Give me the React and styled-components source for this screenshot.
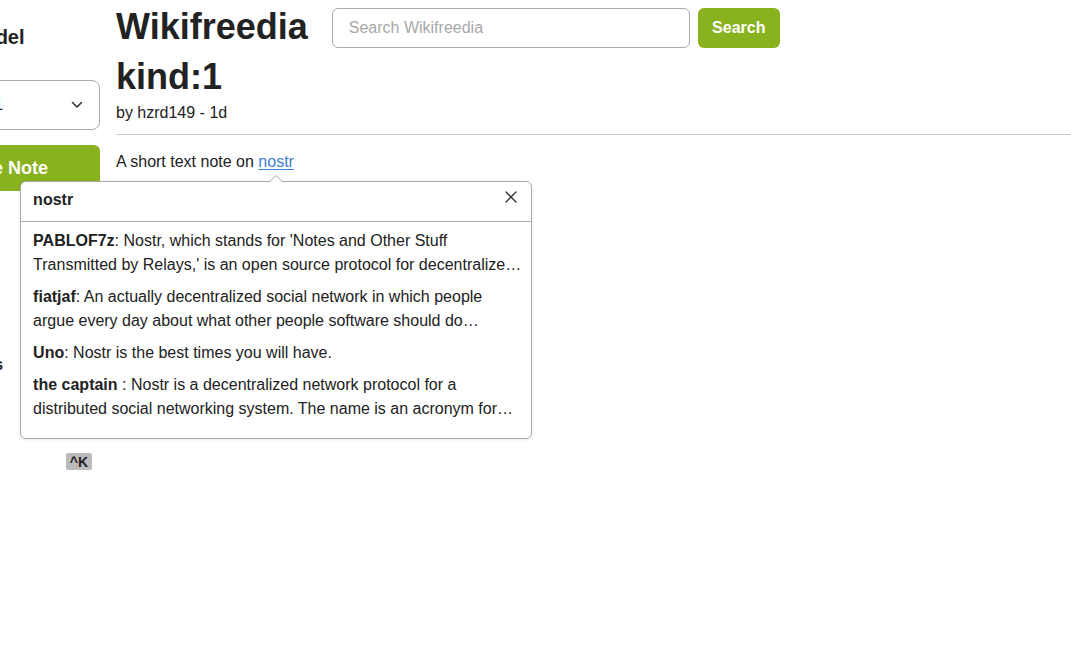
import React, { useState } from 'react';
import styled, { createGlobalStyle } from 'styled-components';

const GlobalStyle = createGlobalStyle`
  html, body {
    margin: 0;
    padding: 0;
    background: #ffffff;
    overflow: hidden;
  }
  body {
    font-family: 'Liberation Sans', Arial, sans-serif;
    color: #222222;
  }
  * {
    box-sizing: border-box;
  }
`;

const GREEN = '#88b21e';

// --- Layout ---

const Page = styled.div`
  display: flex;
  align-items: flex-start;
  gap: 16px;
  width: 1071px;
  height: 655px;
`;

const Sidebar = styled.aside`
  width: 200px;
  margin-left: -100px;
  padding-left: 16px;
  display: flex;
  flex-direction: column;
  flex-shrink: 0;
`;

const SideHeading = styled.h2`
  margin: ${(p) => p.$top || 0}px 0 0 0;
  font-size: ${(p) => p.$size || 20}px;
  line-height: 24px;
  font-weight: 700;
  white-space: nowrap;
`;

const SelectBox = styled.div`
  margin-top: 31px;
  height: 50px;
  border: 1px solid #aaaaaa;
  border-radius: 8px;
  padding: 0 16px;
  display: flex;
  align-items: center;
  justify-content: space-between;
  font-size: 16px;
  white-space: nowrap;
  color: #222;
`;

const PrimaryButton = styled.button`
  margin-top: 15px;
  height: 46px;
  border: none;
  border-radius: 6px;
  background: ${GREEN};
  color: #fff;
  font-family: inherit;
  font-size: 18px;
  font-weight: 700;
  text-align: left;
  padding: 0 0 0 31px;
  white-space: nowrap;
`;

const ShortcutRow = styled.div`
  margin-top: 76px;
  display: flex;
  justify-content: flex-end;
  padding-right: 8px;
`;

const Kbd = styled.kbd`
  display: inline-flex;
  align-items: center;
  justify-content: center;
  width: 26px;
  height: 17px;
  background: #bbbbbb;
  border-radius: 2px;
  font-family: 'Liberation Sans', Arial, sans-serif;
  font-size: 14px;
  font-weight: 700;
  color: #222;
`;

const Main = styled.main`
  flex: 1;
  min-width: 0;
  display: flex;
  flex-direction: column;
`;

const TopBar = styled.header`
  display: flex;
  align-items: flex-start;
  gap: 24px;
`;

const Title = styled.h1`
  margin: 5px 0 0 0;
  font-size: 36px;
  line-height: 1.2;
  font-weight: 700;
  white-space: nowrap;
`;

const SearchForm = styled.form`
  margin-top: 8px;
  display: flex;
  gap: 8px;
`;

const SearchInput = styled.input`
  width: 358px;
  height: 40px;
  border: 1px solid #aaaaaa;
  border-radius: 6px;
  padding: 0 16px;
  font-family: inherit;
  font-size: 16px;
  color: #222;
  outline: none;

  &::placeholder {
    color: #a8a8a8;
  }
`;

const SearchButton = styled.button`
  width: 82px;
  height: 40px;
  border: none;
  border-radius: 6px;
  background: ${GREEN};
  color: #fff;
  font-family: inherit;
  font-size: 16px;
  font-weight: 700;
`;

const Kind = styled.h1`
  margin: 7px 0 0 0;
  font-size: 36px;
  line-height: 1.2;
  font-weight: 700;
`;

const Byline = styled.div`
  margin-top: 3px;
  font-size: 16px;
  line-height: 24px;
`;

const Rule = styled.hr`
  margin: 9px 0 0 0;
  border: none;
  border-top: 1px solid #cccccc;
`;

const Body = styled.p`
  margin: 15px 0 0 0;
  font-size: 16px;
  line-height: 24px;
`;

const LinkWrap = styled.span`
  position: relative;
`;

const Link = styled.a`
  color: #3a7dd4;
  text-decoration: underline;
  text-underline-offset: 2px;
  cursor: pointer;
`;

// --- Popover ---

const Popover = styled.div`
  position: absolute;
  top: 28px;
  left: 50%;
  transform: translateX(-50%);
  width: 512px;
  background: #fff;
  border: 1px solid #aaaaaa;
  border-radius: 6px;
  box-shadow: 0 1px 4px rgba(0, 0, 0, 0.08);
  z-index: 10;

  &::before,
  &::after {
    content: '';
    position: absolute;
    left: 50%;
    width: 0;
    height: 0;
    border-style: solid;
    transform: translateX(-50%);
  }

  &::before {
    top: -7px;
    border-width: 0 7px 7px 7px;
    border-color: transparent transparent #aaaaaa transparent;
  }

  &::after {
    top: -6px;
    border-width: 0 6px 6px 6px;
    border-color: transparent transparent #ffffff transparent;
  }
`;

const PopHeader = styled.div`
  display: flex;
  align-items: center;
  justify-content: space-between;
  height: 40px;
  padding: 0 14px 4px 12px;
  border-bottom: 1px solid #aaaaaa;
  font-size: 16px;
  font-weight: 700;
`;

const CloseButton = styled.button`
  border: none;
  background: none;
  padding: 0;
  display: flex;
  margin-top: -5px;
  cursor: pointer;
`;

const PopList = styled.div`
  display: flex;
  flex-direction: column;
  gap: 8px;
  padding: 7px 8px 17px 12px;
`;

const Entry = styled.div`
  font-size: 16px;
  line-height: 24px;
  display: -webkit-box;
  -webkit-line-clamp: 2;
  -webkit-box-orient: vertical;
  overflow: hidden;

  b {
    font-weight: 700;
  }
`;

const entries = [
  {
    author: 'PABLOF7z',
    sep: ': ',
    text: "Nostr, which stands for 'Notes and Other Stuff Transmitted by Relays,' is an open source protocol for decentralized social networking and communication that aims to be censorship resistant.",
  },
  {
    author: 'fiatjaf',
    sep: ': ',
    text: 'An actually decentralized social network in which people argue every day about what other people software should do differently.',
  },
  {
    author: 'Uno',
    sep: ': ',
    text: 'Nostr is the best times you will have.',
  },
  {
    author: 'the captain',
    sep: ' : ',
    text: 'Nostr is a decentralized network protocol for a distributed social networking system. The name is an acronym for Notes and Other Stuff Transmitted by Relays.',
  },
];

const Chevron = () => (
  <svg width="12" height="8" viewBox="0 0 12 8" fill="none">
    <path d="M1.5 1.5 L6 6 L10.5 1.5" stroke="#333" strokeWidth="1.6" strokeLinecap="round" strokeLinejoin="round" />
  </svg>
);

const CloseIcon = () => (
  <svg width="12" height="12" viewBox="0 0 12 12" fill="none">
    <path d="M1 1 L11 11 M11 1 L1 11" stroke="#333" strokeWidth="1.4" strokeLinecap="round" />
  </svg>
);

const App = () => {
  const [open, setOpen] = useState(true);

  return (
    <>
      <GlobalStyle />
      <Page>
        <Sidebar>
          <SideHeading $top={25}>Your model</SideHeading>
          <SelectBox>
            <span>Llama 3.1</span>
            <Chevron />
          </SelectBox>
          <PrimaryButton type="button">Create Note</PrimaryButton>
          <SideHeading $top={162} $size={16}>Bookmarks</SideHeading>
          <ShortcutRow>
            <Kbd>^K</Kbd>
          </ShortcutRow>
        </Sidebar>

        <Main>
          <TopBar>
            <Title>Wikifreedia</Title>
            <SearchForm onSubmit={(e) => e.preventDefault()}>
              <SearchInput placeholder="Search Wikifreedia" />
              <SearchButton type="submit">Search</SearchButton>
            </SearchForm>
          </TopBar>
          <Kind>kind:1</Kind>
          <Byline>by hzrd149 - 1d</Byline>
          <Rule />
          <Body>
            A short text note on{' '}
            <LinkWrap>
              <Link onClick={() => setOpen(true)}>nostr</Link>
              {open && (
                <Popover>
                  <PopHeader>
                    <span>nostr</span>
                    <CloseButton type="button" onClick={() => setOpen(false)}>
                      <CloseIcon />
                    </CloseButton>
                  </PopHeader>
                  <PopList>
                    {entries.map((e) => (
                      <Entry key={e.author}>
                        <b>{e.author}</b>
                        {e.sep}
                        {e.text}
                      </Entry>
                    ))}
                  </PopList>
                </Popover>
              )}
            </LinkWrap>
          </Body>
        </Main>
      </Page>
    </>
  );
};

export default App;
